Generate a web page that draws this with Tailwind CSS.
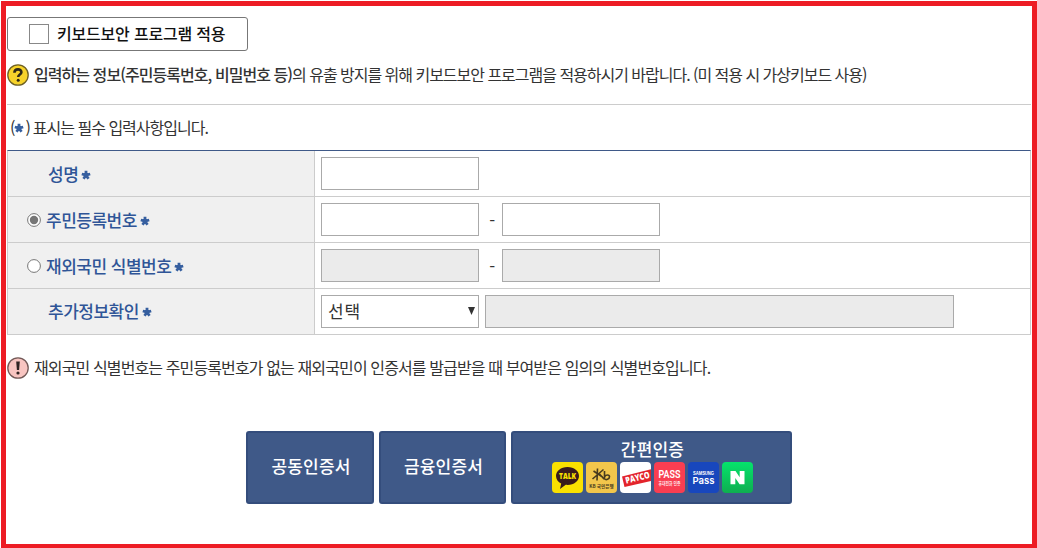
<!DOCTYPE html>
<html lang="ko">
  <head>
    <meta charset="UTF-8" />
    <meta name="viewport" content="width=device-width, initial-scale=1.0" />
    <title>본인인증</title>
    <script src="https://cdn.jsdelivr.net/npm/@tailwindcss/browser@4"></script>
  </head>
  <body class="h-screen overflow-hidden bg-white pl-px pt-px font-['Noto_Sans_CJK_KR',sans-serif] text-[#333]">
    <svg class="hidden">
      <symbol id="star" viewBox="0 0 10 10">
        <path d="M5 5.200V.8M5 5.200l4.200-1.200M5 5.200l2.500 3.500M5 5.200L2.500 8.700M5 5.200L.8 4" stroke="#365f9f" stroke-width="2.800" fill="none" />
      </symbol>
    </svg>

    <main class="h-[547px] w-[1036px] overflow-hidden border-[5px] border-b-4 border-[#ed1c24] pl-px pr-px pt-[11px]">
      <!-- Keyboard security -->
      <label class="flex h-[34px] w-[241px] items-center rounded-[3px] border border-[#777] pl-[21px]">
        <input type="checkbox" class="size-5 appearance-none border border-[#888] bg-white" />
        <span class="ml-2 pb-0.5 whitespace-nowrap text-base font-medium leading-none tracking-[-0.2px] text-[#111]">키보드보안 프로그램 적용</span>
      </label>

      <div class="mt-[13px] flex h-[22px] items-center">
        <svg class="size-[22px] shrink-0" viewBox="0 0 22 22">
          <circle cx="11" cy="11" r="10.200" fill="#f7d32a" stroke="#6e6124" stroke-width="1.300" />
          <path d="M7.400 8.800C7.500 4.300 14.500 4.400 14.400 8.300C14.300 10.600 11.200 10.400 11.200 13" fill="none" stroke="#302a18" stroke-width="2.600" />
          <circle cx="11.200" cy="16.200" r="1.500" fill="#302a18" />
        </svg>
        <p class="ml-[5px] pb-0.5 whitespace-nowrap text-base leading-none tracking-[-1.02px]"><b class="font-medium tracking-[-0.95px]">입력하는 정보(주민등록번호, 비밀번호 등)</b>의 유출 방지를 위해 키보드보안 프로그램을 적용하시기 바랍니다. (미 적용 시 가상키보드 사용)</p>
      </div>

      <hr class="mt-[18px] border-[#ccc]" />

      <p class="mt-3 flex h-[22px] items-center whitespace-nowrap pb-0.5 pl-[3px] text-base leading-none tracking-[-1px]">(<svg class="mt-0.5 size-[10px]"><use href="#star" /></svg><span class="ml-px">)</span><span class="ml-[3px]">표시는 필수 입력사항입니다.</span></p>

      <!-- Applicant form -->
      <form class="mt-[11px] w-[1024px] border-x border-t border-x-[#ccc] border-t-[#3f5988] text-[17px] tracking-[-0.5px]">
        <div class="flex h-[46px] border-b border-[#ccc]">
          <div class="flex w-[307px] items-center border-r border-[#ccc] bg-[#f0f0f0] pl-10 font-medium text-[#2f5597]">
            <label>성명</label><svg class="ml-[3px] mt-0.5 size-[10px]"><use href="#star" /></svg>
          </div>
          <div class="flex items-center pl-1.5">
            <input class="h-[33px] w-[158px] border border-[#aaa]" />
          </div>
        </div>
        <div class="flex h-[46px] border-b border-[#ccc]">
          <div class="flex w-[307px] items-center border-r border-[#ccc] bg-[#f0f0f0] pl-[19px] font-medium text-[#2f5597]">
            <svg class="mr-[5px] size-[14px]" viewBox="0 0 14 14"><circle cx="7" cy="7" r="6.400" fill="#fff" stroke="#767676" /><circle cx="7" cy="7" r="4.200" fill="#767676" /></svg>
            <label>주민등록번호</label><svg class="ml-[3px] mt-0.5 size-[10px]"><use href="#star" /></svg>
          </div>
          <div class="flex items-center pl-1.5">
            <input class="h-[33px] w-[158px] border border-[#aaa]" />
            <span class="w-[23px] pl-[3px] text-center">-</span>
            <input class="h-[33px] w-[158px] border border-[#aaa]" />
          </div>
        </div>
        <div class="flex h-[46px] border-b border-[#ccc]">
          <div class="flex w-[307px] items-center border-r border-[#ccc] bg-[#f0f0f0] pl-[19px] font-medium text-[#2f5597]">
            <svg class="mr-[5px] size-[14px]" viewBox="0 0 14 14"><circle cx="7" cy="7" r="6.400" fill="#fff" stroke="#767676" /></svg>
            <label>재외국민 식별번호</label><svg class="ml-[3px] mt-0.5 size-[10px]"><use href="#star" /></svg>
          </div>
          <div class="flex items-center pl-1.5">
            <input class="h-[33px] w-[158px] border border-[#aaa] bg-[#ebebeb]" disabled />
            <span class="w-[23px] pl-[3px] text-center">-</span>
            <input class="h-[33px] w-[158px] border border-[#aaa] bg-[#ebebeb]" disabled />
          </div>
        </div>
        <div class="flex h-[46px] border-b border-[#ccc]">
          <div class="flex w-[307px] items-center border-r border-[#ccc] bg-[#f0f0f0] pl-10 font-medium text-[#2f5597]">
            <label class="pb-0.5">추가정보확인</label><svg class="ml-[3px] mt-px size-[10px]"><use href="#star" /></svg>
          </div>
          <div class="flex items-center gap-1.5 pl-1.5">
            <div class="flex h-[33px] w-[158px] items-center justify-between border border-[#aaa] bg-white pl-1.5 pr-[3px] tracking-[0.8px]">
              <span class="pb-px">선택</span>
              <svg class="mb-px h-2 w-[7px]" viewBox="0 0 7 8"><path d="M0 0h7L3.500 8z" fill="#333" /></svg>
            </div>
            <input class="h-[33px] w-[469px] border border-[#aaa] bg-[#ebebeb]" disabled />
          </div>
        </div>
      </form>

      <div class="mt-[22px] flex h-[22px] items-center">
        <svg class="size-[22px] shrink-0" viewBox="0 0 22 22">
          <circle cx="11" cy="11" r="10.200" fill="#f8c5c1" stroke="#735957" stroke-width="1.300" />
          <path d="M9.200 4.500h3.600l-.7 8.500H9.900z" fill="#302322" />
          <circle cx="11" cy="16" r="1.600" fill="#302322" />
        </svg>
        <p class="ml-[5px] pb-0.5 whitespace-nowrap text-base leading-none tracking-[-0.88px]">재외국민 식별번호는 주민등록번호가 없는 재외국민이 인증서를 발급받을 때 부여받은 임의의 식별번호입니다.</p>
      </div>

      <!-- Certificate buttons -->
      <div class="ml-[239px] mt-[52px] flex h-[73px] gap-[5px] text-[17px] font-medium tracking-[0.2px] text-white">
        <button class="w-32 rounded-[3px] border-2 border-[#344d7c] bg-[#3f5988] pb-1 pl-0.5">공동인증서</button>
        <button class="w-[127px] rounded-[3px] border-2 border-[#344d7c] bg-[#3f5988] pb-1 pl-0.5">금융인증서</button>
        <button class="flex w-[281px] flex-col items-center rounded-[3px] border-2 border-[#344d7c] bg-[#3f5988] pt-[7px]">
          <span class="pl-0.5 leading-[18px]">간편인증</span>
          <span class="ml-0.5 mt-1 flex gap-[3px] tracking-normal">
            <svg class="size-[31px]" viewBox="0 0 31 31">
              <rect width="31" height="31" rx="4" fill="#fae100" />
              <path d="M15.500 5C8.800 5 4 9 4 14c0 3.300 2.100 6 5.200 7.500L8 27l5.700-4.200c7.500.8 13.300-3.300 13.300-8.800 0-5-4.800-9-11.500-9z" fill="#391b1b" />
              <text x="15.500" y="17.300" text-anchor="middle" textLength="17" lengthAdjust="spacingAndGlyphs" font-family="Open Sans" font-size="8" font-weight="800" fill="#fae100">TALK</text>
            </svg>
            <svg class="size-[31px]" viewBox="0 0 31 31">
              <rect width="31" height="31" rx="4" fill="#f2c64b" />
              <path d="M7.500 9l9 6M6.500 17L17.500 7.500M11.500 6.500L11 18.500M13.500 12l4.500 5M18.500 9v8c1.500 1.200 5 .5 5-2.200 0-2.500-3.500-2.500-5 0" fill="none" stroke="#493b1e" stroke-width="1.600" />
              <text x="15.500" y="25.700" text-anchor="middle" textLength="24.500" lengthAdjust="spacingAndGlyphs" font-family="Noto Sans CJK KR" font-size="5" font-weight="700" fill="#493b1e">KB 국민은행</text>
            </svg>
            <svg class="size-[31px] overflow-visible" viewBox="0 0 31 31">
              <rect width="31" height="31" rx="4" fill="#fff" />
              <path d="M2 14.500L31 7.300V19L4.500 25z" fill="#e3242b" />
              <text transform="translate(6.300 21.700) rotate(-14)" textLength="24.800" lengthAdjust="spacingAndGlyphs" font-family="Open Sans" font-size="9" font-weight="800" fill="#fff">PAYCO</text>
            </svg>
            <svg class="size-[31px]" viewBox="0 0 31 31">
              <rect width="31" height="31" rx="4" fill="#f93e51" />
              <text x="15.500" y="16.200" text-anchor="middle" textLength="22" lengthAdjust="spacingAndGlyphs" font-family="Roboto" font-size="11.500" font-weight="600" fill="#fff">PASS</text>
              <text x="15.500" y="23" text-anchor="middle" textLength="22" lengthAdjust="spacingAndGlyphs" font-family="Noto Sans CJK KR" font-size="4.800" fill="#fff">휴대전화 인증</text>
            </svg>
            <svg class="size-[31px]" viewBox="0 0 31 31">
              <rect width="31" height="31" rx="4" fill="#1847bd" />
              <text x="15.500" y="12.500" text-anchor="middle" textLength="21" lengthAdjust="spacingAndGlyphs" font-family="Liberation Sans" font-size="4.800" font-weight="700" fill="#fff">SAMSUNG</text>
              <text x="15.500" y="21.500" text-anchor="middle" textLength="22" lengthAdjust="spacingAndGlyphs" font-family="Inter" font-size="9.500" font-weight="600" fill="#fff">Pass</text>
            </svg>
            <svg class="size-[31px]" viewBox="0 0 31 31">
              <defs><linearGradient id="naver" x2="0" y2="1"><stop stop-color="#05e36c" /><stop offset="1" stop-color="#0fae50" /></linearGradient></defs>
              <rect width="31" height="31" rx="4" fill="url(#naver)" />
              <path d="M8.500 9h5l4.200 6.300V9h4.800v13.200h-4.900l-4.300-6.300v6.300H8.500z" fill="#fff" />
            </svg>
          </span>
        </button>
      </div>
    </main>
  </body>
</html>
